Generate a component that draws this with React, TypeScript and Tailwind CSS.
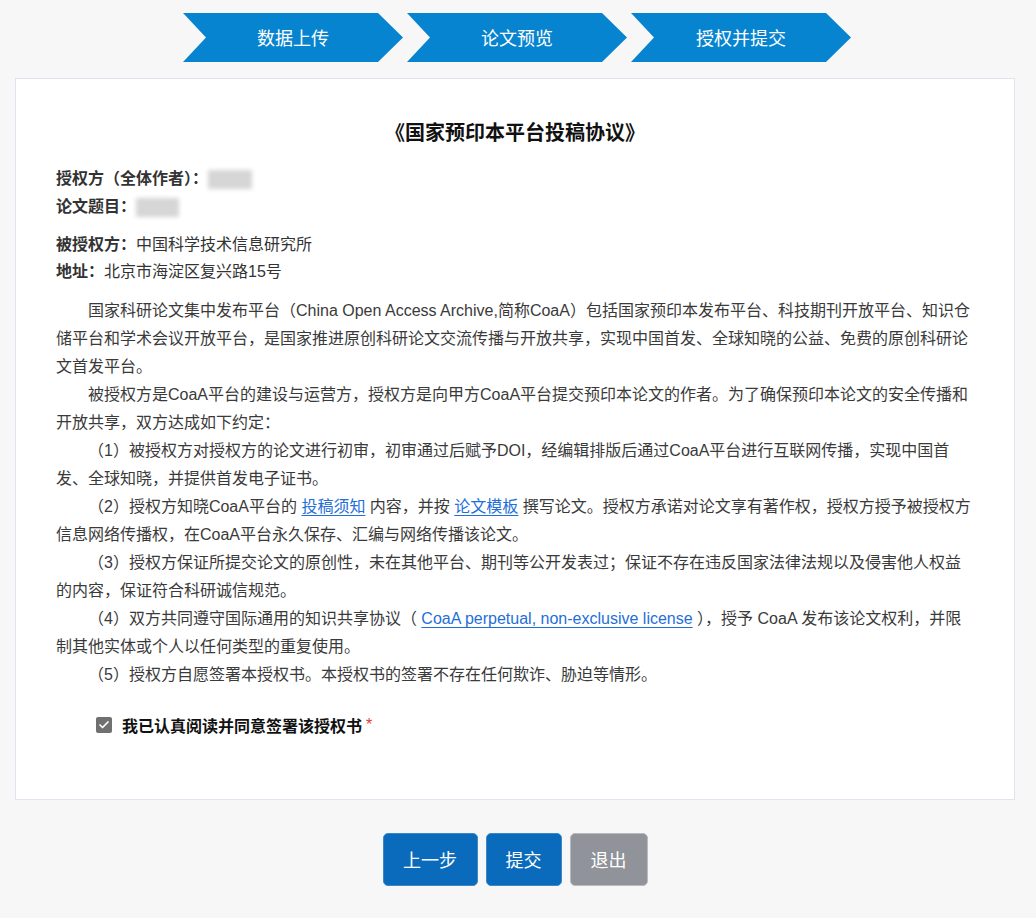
import { Check } from "lucide-react";

const steps = ["数据上传", "论文预览", "授权并提交"];

function Link({ children }: { children: React.ReactNode }) {
  return (
    <a href="#" className="text-[#1f6fd8] underline underline-offset-[3px]">
      {children}
    </a>
  );
}

function Blur({ w }: { w: number }) {
  return (
    <span
      className="inline-block h-[19px] bg-[#d6d6d6] blur-[2px] align-middle"
      style={{ width: w }}
    />
  );
}

export default function App() {
  return (
    <div className="min-h-screen bg-[#f7f7f7] text-[#333] [font-family:'Liberation_Sans','Noto_Sans_CJK_SC',sans-serif]">
      <div className="ml-[15px] w-[1000px] pt-[13px] pb-[32px]">
        {/* ─── Steps ─── */}
        <div className="flex justify-center gap-[4px] pl-[4px]">
          {steps.map((s) => (
            <div
              key={s}
              className="flex h-[49px] w-[220px] items-center justify-center bg-[#0784cf] text-[18px] text-white [clip-path:polygon(0_0,195px_0,220px_50%,195px_100%,0_100%,23px_50%)]"
            >
              <span className="[font-family:'Noto_Sans_CJK_SC',sans-serif]">{s}</span>
            </div>
          ))}
        </div>

        {/* ─── Card ─── */}
        <div className="mt-[16px] border border-[#dfe5ef] bg-white px-[40px] pt-[39px] pb-[60px] text-[16px] leading-[28px]">
          <h1 className="text-center text-[20px] font-bold text-[#111] [font-family:'Noto_Sans_CJK_SC',sans-serif]">
            《国家预印本平台投稿协议》
          </h1>

          <div className="mt-[19px] font-bold">
            <div className="flex items-center">
              授权方（全体作者）：<Blur w={44} />
            </div>
            <div className="flex items-center">
              论文题目：<Blur w={43} />
            </div>
          </div>

          <div className="mt-[10px] leading-[27px]">
            <div>
              <b>被授权方：</b>中国科学技术信息研究所
            </div>
            <div>
              <b>地址：</b>北京市海淀区复兴路15号
            </div>
          </div>

          <div className="mt-[12px] text-[#3a3a3a] [text-indent:2em]">
            <p>
              国家科研论文集中发布平台（China Open Access Archive,简称CoaA）包括国家预印本发布平台、科技期刊开放平台、知识仓储平台和学术会议开放平台，是国家推进原创科研论文交流传播与开放共享，实现中国首发、全球知晓的公益、免费的原创科研论文首发平台。
            </p>
            <p>
              被授权方是CoaA平台的建设与运营方，授权方是向甲方CoaA平台提交预印本论文的作者。为了确保预印本论文的安全传播和开放共享，双方达成如下约定：
            </p>
            <p>
              （1）被授权方对授权方的论文进行初审，初审通过后赋予DOI，经编辑排版后通过CoaA平台进行互联网传播，实现中国首发、全球知晓，并提供首发电子证书。
            </p>
            <p>
              （2）授权方知晓CoaA平台的 <Link>投稿须知</Link> 内容，并按{" "}
              <Link>论文模板</Link>{" "}
              撰写论文。授权方承诺对论文享有著作权，授权方授予被授权方信息网络传播权，在CoaA平台永久保存、汇编与网络传播该论文。
            </p>
            <p>
              （3）授权方保证所提交论文的原创性，未在其他平台、期刊等公开发表过；保证不存在违反国家法律法规以及侵害他人权益的内容，保证符合科研诚信规范。
            </p>
            <p>
              （4）双方共同遵守国际通用的知识共享协议（{" "}
              <Link>CoaA perpetual, non-exclusive license</Link>{" "}
              ），授予 CoaA 发布该论文权利，并限制其他实体或个人以任何类型的重复使用。
            </p>
            <p>（5）授权方自愿签署本授权书。本授权书的签署不存在任何欺诈、胁迫等情形。</p>
          </div>

          <label className="mt-[22px] ml-[40px] flex items-center gap-[10px]">
            <span className="grid h-[16px] w-[16px] place-items-center rounded-[2px] bg-[#707070]">
              <Check className="h-[12px] w-[12px] text-white" strokeWidth={3.5} />
            </span>
            <span className="text-[16px] font-bold text-[#111] [font-family:'Noto_Sans_CJK_SC',sans-serif]">
              我已认真阅读并同意签署该授权书
            </span>
            <span className="-ml-[6px] text-[#e53935]">*</span>
          </label>
        </div>

        {/* ─── Buttons ─── */}
        <div className="mt-[33px] flex justify-center gap-[8px] text-[18px] text-white [font-family:'Noto_Sans_CJK_SC',sans-serif]">
          <button className="h-[53px] w-[95px] rounded-[5px] border border-[#3d87c6] bg-[#0a6bbd]">
            上一步
          </button>
          <button className="h-[53px] w-[76px] rounded-[5px] border border-[#3d87c6] bg-[#0a6bbd]">
            提交
          </button>
          <button className="h-[53px] w-[78px] rounded-[5px] border border-[#b9babe] bg-[#909399]">
            退出
          </button>
        </div>
      </div>
    </div>
  );
}
